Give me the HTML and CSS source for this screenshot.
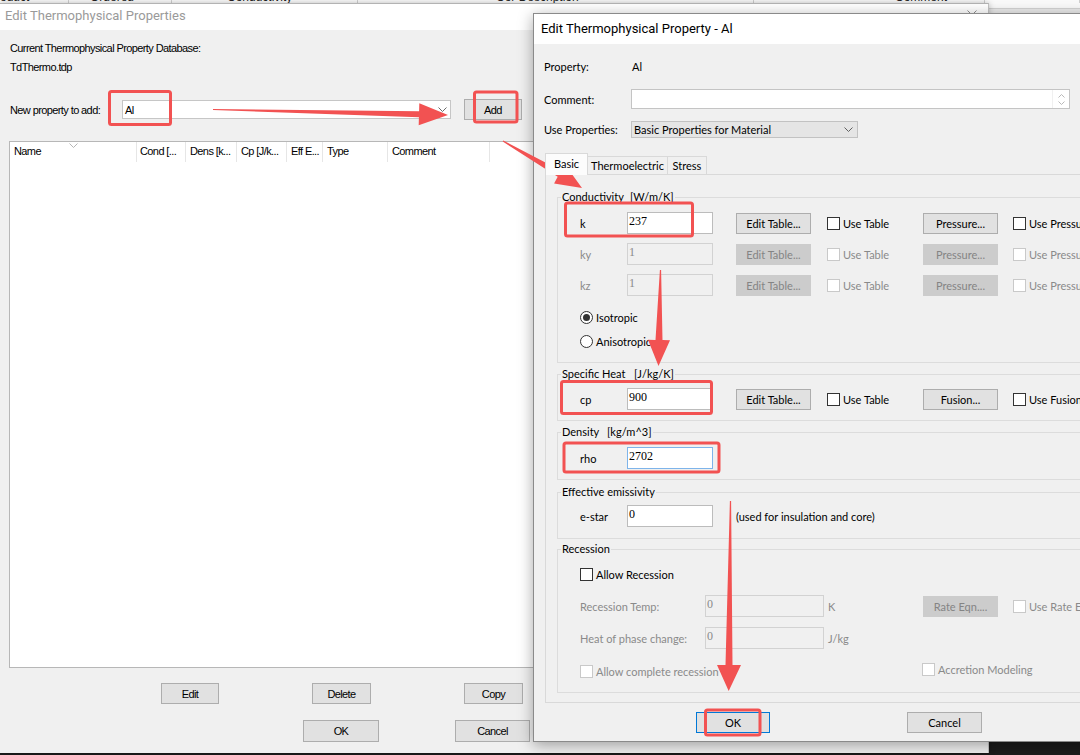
FILE: index.html
```html
<!DOCTYPE html>
<html lang="en">

<head>
    <meta charset="UTF-8">
    <title>Edit Thermophysical Property - Al</title>
    <link rel="stylesheet" href="styles.css">
</head>

<body>
<div class="desktop">

    <!-- window further back, only its header edge is left uncovered -->
    <div class="backwin">
        <div class="backhead">
            <span class="bh-a">oduct</span>
            <span class="bh-b">Ordered</span>
            <span class="bh-c">Conductivity</span>
            <span class="bh-d">Cor Description</span>
            <span class="bh-e">Comment</span>
            <span class="bh-f"></span>
        </div>
    </div>

    <!-- property database dialog -->
    <div class="win props-win">
        <div class="caption">
            <span>Edit Thermophysical Properties</span>
            <svg class="close" width="10" height="10" viewBox="0 0 10 10">
                <path d="M0.5 0.5L9.5 9.5M9.5 0.5L0.5 9.5" stroke="#8f8f8f" stroke-width="1" fill="none" />
            </svg>
        </div>

        <div class="props-body">
            <p class="line db-title">Current Thermophysical Property Database:</p>
            <p class="line db-file">TdThermo.tdp</p>

            <div class="add-row">
                <span class="add-label">New property to add:</span>
                <div class="combo">
                    <span>Al</span>
                    <svg width="9" height="5" viewBox="0 0 9 5">
                        <path d="M0.5 0.5L4.5 4.5L8.5 0.5" stroke="#6b6b6b" fill="none" />
                    </svg>
                </div>
                <button class="btn add-btn">Add</button>
            </div>

            <div class="listview">
                <div class="lv-head">
                    <span class="col c-name">Name
                        <svg class="sort" width="9" height="5" viewBox="0 0 9 5">
                            <path d="M0.5 0.5L4.5 4.5L8.5 0.5" stroke="#b5b5b5" fill="none" />
                        </svg>
                    </span>
                    <span class="col c-cond">Cond [...</span>
                    <span class="col c-dens">Dens [k...</span>
                    <span class="col c-cp">Cp [J/k...</span>
                    <span class="col c-eff">Eff E...</span>
                    <span class="col c-type">Type</span>
                    <span class="col c-comment">Comment</span>
                </div>
            </div>

            <div class="btn-row row-edit">
                <button class="btn w58">Edit</button>
                <button class="btn w59">Delete</button>
                <button class="btn w59">Copy</button>
            </div>
            <div class="btn-row row-ok">
                <button class="btn w76">OK</button>
                <button class="btn w75">Cancel</button>
            </div>
        </div>
    </div>

    <!-- editor for a single property -->
    <div class="win edit-win">
        <div class="caption">Edit Thermophysical Property - Al</div>

        <div class="edit-body">
            <div class="field f-prop">
                <span class="field-label">Property:</span>
                <span class="prop-name">Al</span>
            </div>
            <div class="field f-comment">
                <span class="field-label">Comment:</span>
                <div class="memo">
                    <div class="spin">
                        <svg width="7" height="4" viewBox="0 0 7 4"><path d="M0.5 3.5L3.5 0.5L6.5 3.5" stroke="#b9b9b9" fill="none" /></svg>
                        <svg width="7" height="4" viewBox="0 0 7 4"><path d="M0.5 0.5L3.5 3.5L6.5 0.5" stroke="#b9b9b9" fill="none" /></svg>
                    </div>
                </div>
            </div>
            <div class="field f-use">
                <span class="field-label">Use Properties:</span>
                <div class="select">
                    <span>Basic Properties for Material</span>
                    <svg width="9" height="5" viewBox="0 0 9 5">
                        <path d="M0.5 0.5L4.5 4.5L8.5 0.5" stroke="#606060" fill="none" />
                    </svg>
                </div>
            </div>

            <div class="tabs">
                <span class="tab t-basic on">Basic</span>
                <span class="tab t-thermo">Thermoelectric</span>
                <span class="tab t-stress">Stress</span>
            </div>

            <div class="tabpage">
                <fieldset class="grp g-cond">
                    <legend><span class="unit-gap w-cond">Conductivity</span>[W/m/K]</legend>
                    <div class="krow m7">
                        <span class="lbl">k</span>
                        <span class="tb">237</span>
                        <button class="btn et">Edit Table...</button>
                        <span class="chk-cell"><span class="chk"></span>Use Table</span>
                        <button class="btn pr">Pressure...</button>
                        <span class="chk-cell tail"><span class="chk"></span>Use Pressure</span>
                    </div>
                    <div class="krow m9 off">
                        <span class="lbl">ky</span>
                        <span class="tb">1</span>
                        <button class="btn et">Edit Table...</button>
                        <span class="chk-cell"><span class="chk"></span>Use Table</span>
                        <button class="btn pr">Pressure...</button>
                        <span class="chk-cell tail"><span class="chk"></span>Use Pressure</span>
                    </div>
                    <div class="krow m9 off">
                        <span class="lbl">kz</span>
                        <span class="tb">1</span>
                        <button class="btn et">Edit Table...</button>
                        <span class="chk-cell"><span class="chk"></span>Use Table</span>
                        <button class="btn pr">Pressure...</button>
                        <span class="chk-cell tail"><span class="chk"></span>Use Pressure</span>
                    </div>
                    <div class="optrow m13"><span class="radio on"></span>Isotropic</div>
                    <div class="optrow m8"><span class="radio"></span>Anisotropic</div>
                </fieldset>

                <fieldset class="grp g-heat">
                    <legend><span class="unit-gap w-heat">Specific Heat</span>[J/kg/K]</legend>
                    <div class="krow m6">
                        <span class="lbl">cp</span>
                        <span class="tb">900</span>
                        <button class="btn et">Edit Table...</button>
                        <span class="chk-cell"><span class="chk"></span>Use Table</span>
                        <button class="btn pr">Fusion...</button>
                        <span class="chk-cell tail"><span class="chk"></span>Use Fusion</span>
                    </div>
                </fieldset>

                <fieldset class="grp g-dens">
                    <legend><span class="unit-gap w-dens">Density</span>[kg/m^3]</legend>
                    <div class="krow m7">
                        <span class="lbl">rho</span>
                        <span class="tb focus">2702</span>
                    </div>
                </fieldset>

                <fieldset class="grp g-emis">
                    <legend>Effective emissivity</legend>
                    <div class="krow m5">
                        <span class="lbl">e-star</span>
                        <span class="tb">0</span>
                        <span class="note">(used for insulation and core)</span>
                    </div>
                </fieldset>

                <fieldset class="grp g-rec">
                    <legend>Recession</legend>
                    <div class="optrow m9"><span class="chk"></span>Allow Recession</div>
                    <div class="krow m13 off">
                        <span class="lbl wide">Recession Temp:</span>
                        <span class="tb long">0</span>
                        <span class="unit">K</span>
                        <button class="btn pr">Rate Eqn....</button>
                        <span class="chk-cell tail"><span class="chk"></span>Use Rate Eqn</span>
                    </div>
                    <div class="krow m10 off">
                        <span class="lbl wide">Heat of phase change:</span>
                        <span class="tb long">0</span>
                        <span class="unit">J/kg</span>
                    </div>
                    <div class="optrow m14 off">
                        <span class="chk-cell full"><span class="chk"></span>Allow complete recession</span>
                        <span class="chk-cell raised"><span class="chk"></span>Accretion Modeling</span>
                    </div>
                </fieldset>
            </div>

            <div class="btn-row row-dlg">
                <button class="btn default">OK</button>
                <button class="btn cancel">Cancel</button>
            </div>
        </div>
    </div>

    <!-- red call-outs drawn over both dialogs -->
    <svg class="marks" width="1080" height="755" viewBox="0 0 1080 755">
        <g fill="none" stroke="#f25252" stroke-width="3" stroke-linejoin="round">
            <rect x="109.5" y="91.5" width="61" height="33" rx="2" />
            <rect x="474.5" y="92" width="42.5" height="30" rx="2" />
            <rect x="565.5" y="203" width="127" height="33" rx="2" />
            <rect x="561.5" y="381.5" width="150" height="32" rx="2" />
            <rect x="564" y="443" width="155" height="29" rx="2" />
            <rect x="705.5" y="710" width="54.5" height="25" rx="2" />
        </g>
        <g fill="#f25252">
            <polygon points="213,108.9 419.1,111.3 419.3,103.3 448,115 418.7,125.3 418.9,117.3 213,110.1" />
            <polygon points="503.3,140.5 561.2,170.7 564.8,164.2 582,188 554.1,183.4 557.7,176.8 502.7,141.5" />
            <polygon points="659.9,270 655.5,339.9 648,339.8 658.5,366 670,340.2 662.5,340.1 661.1,270" />
            <polygon points="729.9,501 725.5,665 717,664.9 728.7,691 741,665.1 732.5,665 731.1,501" />
        </g>
    </svg>
</div>
</body>

</html>
```

FILE: styles.css
```css
* {
    margin: 0;
    padding: 0;
    box-sizing: border-box;
}

body {
    background-color: #1c1c1c;
}

.desktop {
    position: relative;
    width: 1080px;
    height: 755px;
    overflow: hidden;
    background-color: #1c1c1c;
}

/* back window strip */
.backwin {
    position: absolute;
    left: 0;
    top: 0;
    width: 1080px;
    height: 14px;
    background-color: #ebebeb;
}

.backhead {
    display: flex;
    height: 9px;
    background-color: #fafafa;
    border-bottom: 1px solid #d3d3d3;
    overflow: hidden;
    font: 12px "Liberation Sans", Arial, sans-serif;
    color: #222;
}

.backhead span {
    height: 12px;
    margin-top: -9px;
    line-height: 12px;
    border-right: 1px solid #d0d0d0;
    white-space: nowrap;
    overflow: hidden;
}

.bh-a { width: 69px; }
.bh-b { width: 103px; padding-left: 21px; }
.bh-c { width: 186px; padding-left: 55px; }
.bh-d { width: 396px; padding-left: 138px; }
.bh-e { width: 231px; padding-left: 141px; }
.bh-f { flex: 1; }

/* dialogs */
.win {
    position: absolute;
    background-color: #f0f0f0;
    color: #000;
}

.caption {
    display: flex;
    background-color: #fff;
    font: 13px Roboto, "Noto Sans", sans-serif;
    letter-spacing: 0;
    white-space: nowrap;
}

.btn {
    font: inherit;
    letter-spacing: inherit;
    color: #000;
    background-color: #e1e1e1;
    border: 1px solid #adadad;
    white-space: nowrap;
}

.btn-row {
    display: flex;
}

/* property list dialog */
.props-win {
    left: 0;
    top: 3px;
    width: 989px;
    height: 750px;
    border-top: 1px solid #b3b3b3;
    border-right: 1px solid #c2c2c2;
    box-shadow: 0 0 6px rgba(0, 0, 0, 0.25);
    font: 11px "Liberation Sans", Arial, sans-serif;
    letter-spacing: -0.6px;
}

.props-win .caption {
    height: 26px;
    padding: 3px 0 0 5px;
    line-height: 18px;
    color: #9a9a9a;
}

.close {
    margin: 3px 11px 0 auto;
}

.props-body {
    padding-left: 10px;
}

.line {
    line-height: 14px;
}

.db-title {
    margin-top: 11px;
}

.db-file {
    margin-top: 5px;
}

.add-row {
    display: flex;
    align-items: center;
    height: 21px;
    margin-top: 25px;
}

.add-label {
    width: 112px;
}

.combo {
    display: flex;
    align-items: center;
    justify-content: space-between;
    width: 329px;
    height: 19px;
    padding: 0 3px 0 2px;
    background-color: #fff;
    border: 1px solid #c6c6c6;
}

.add-btn {
    width: 58px;
    height: 21px;
    margin-left: 13px;
}

.listview {
    width: 969px;
    height: 527px;
    margin: 21px 0 0 -1px;
    background-color: #fff;
    border: 1px solid #b7b7b7;
}

.lv-head {
    display: flex;
    height: 20px;
    line-height: 19px;
}

.col {
    position: relative;
    padding-left: 4px;
    border-right: 1px solid #e6e6e6;
    white-space: nowrap;
    overflow: hidden;
}

.c-name { width: 127px; }
.c-cond { width: 49px; padding-left: 3px; }
.c-dens { width: 51px; }
.c-cp { width: 50px; }
.c-eff { width: 36px; }
.c-type { width: 65px; }
.c-comment { width: 102px; }

.sort {
    position: absolute;
    left: 59px;
    top: 1px;
}

.row-edit {
    height: 21px;
    margin-top: 15px;
    padding-left: 151px;
    gap: 93px;
}

.row-ok {
    height: 22px;
    margin-top: 16px;
    padding-left: 293px;
    gap: 76px;
}

.w58 { width: 58px; }
.w59 { width: 59px; }
.w75 { width: 75px; }
.w76 { width: 76px; }

/* property editor dialog */
.edit-win {
    left: 533px;
    top: 13px;
    width: 620px;
    height: 729px;
    border: 1px solid #8a8a8a;
    box-shadow: 0 3px 14px rgba(0, 0, 0, 0.35);
    font: 11px Lato, "Noto Sans", sans-serif;
}

.edit-win .caption {
    height: 30px;
    padding: 0 0 1px 7px;
    align-items: center;
}

.edit-body {
    padding-left: 10px;
}

.field {
    display: flex;
    align-items: center;
}

.field-label {
    width: 87px;
}

.f-prop {
    height: 20px;
    margin-top: 12px;
}

.prop-name {
    padding-left: 1px;
}

.f-comment {
    height: 20px;
    margin-top: 13px;
}

.memo {
    display: flex;
    justify-content: flex-end;
    width: 439px;
    height: 20px;
    background-color: #fff;
    border: 1px solid #c4c4c4;
}

.spin {
    display: flex;
    flex-direction: column;
    justify-content: space-around;
    align-items: center;
    width: 17px;
    padding: 2px 0;
    border-left: 1px solid #f0f0f0;
}

.f-use {
    height: 17px;
    margin-top: 12px;
}

.select {
    display: flex;
    align-items: center;
    justify-content: space-between;
    width: 227px;
    height: 17px;
    padding: 0 4px 0 2px;
    background-color: #e5e5e5;
    border: 1px solid #c2c2c2;
}

/* tab strip */
.tabs {
    position: relative;
    z-index: 1;
    display: flex;
    align-items: flex-end;
    height: 21px;
    margin: 15px 0 0 1px;
}

.tab {
    height: 18px;
    line-height: 17px;
    text-align: center;
    border: 1px solid #d9d9d9;
    border-bottom: none;
    background-color: #f0f0f0;
}

.tab + .tab {
    margin-left: -1px;
}

.tab.on {
    height: 22px;
    margin-bottom: -1px;
    line-height: 19px;
    background-color: #fcfcfc;
}

.t-basic { width: 43px; }
.t-thermo { width: 81px; }
.t-stress { width: 40px; }

.tabpage {
    height: 529px;
    margin-left: 1px;
    padding-left: 11px;
    border: 1px solid #d9d9d9;
}

/* group boxes */
.grp {
    min-width: 0;
    border: 1px solid #dcdcdc;
}

.grp legend {
    margin-left: 3px;
    padding: 0 1px;
    line-height: 16px;
}

.unit-gap {
    display: inline-block;
}

.w-cond { width: 68px; }
.w-heat { width: 72px; }
.w-dens { width: 45px; }

.g-cond { margin-top: 14px; padding-bottom: 13px; }
.g-heat { margin-top: 3px; padding-bottom: 10px; }
.g-dens { margin-top: 3px; padding-bottom: 10px; }
.g-emis { margin-top: 4px; padding-bottom: 11px; }
.g-rec { margin-top: 2px; padding-bottom: 13px; }

.krow {
    display: flex;
    align-items: center;
    height: 22px;
    padding-left: 22px;
    white-space: nowrap;
}

.optrow {
    display: flex;
    align-items: center;
    height: 16px;
    padding-left: 22px;
    white-space: nowrap;
}

.m5 { margin-top: 5px; }
.m6 { margin-top: 6px; }
.m7 { margin-top: 7px; }
.m8 { margin-top: 8px; }
.m9 { margin-top: 9px; }
.m10 { margin-top: 10px; }
.m13 { margin-top: 13px; }
.m14 { margin-top: 14px; }

.lbl {
    width: 47px;
    flex-shrink: 0;
}

.lbl.wide {
    width: 125px;
}

.tb {
    flex-shrink: 0;
    width: 86px;
    height: 22px;
    padding: 1px 0 0 1px;
    font: 12px "Liberation Serif", "Times New Roman", serif;
    line-height: 14px;
    background-color: #fff;
    border: 1px solid #bcbcbc;
}

.tb.long {
    width: 119px;
}

.tb.focus {
    border-color: #7eb4ea;
}

.krow .et {
    flex-shrink: 0;
    width: 75px;
    height: 21px;
    margin-left: 23px;
}

.krow .pr {
    flex-shrink: 0;
    width: 75px;
    height: 21px;
}

.chk-cell {
    display: flex;
    align-items: center;
    flex-shrink: 0;
    width: 96px;
    margin-left: 16px;
}

.chk-cell.tail {
    width: auto;
    margin-left: 15px;
}

.optrow .chk-cell {
    margin-left: 0;
}

.chk-cell.full {
    width: 342px;
}

.chk-cell.raised {
    width: auto;
    margin-bottom: 4px;
}

.chk {
    flex-shrink: 0;
    width: 13px;
    height: 13px;
    margin-right: 3px;
    background-color: #fff;
    border: 1px solid #333;
}

.radio {
    flex-shrink: 0;
    position: relative;
    width: 13px;
    height: 13px;
    margin-right: 3px;
    background-color: #fff;
    border: 1px solid #333;
    border-radius: 50%;
}

.radio.on::after {
    content: "";
    position: absolute;
    left: 2px;
    top: 2px;
    width: 7px;
    height: 7px;
    border-radius: 50%;
    background-color: #333;
}

.note {
    margin-left: 23px;
}

.unit {
    flex-shrink: 0;
    width: 99px;
    padding-left: 4px;
}

/* disabled controls */
.off {
    color: #8a8a8a;
}

.off .tb {
    color: #8a8a8a;
    background-color: #f0f0f0;
    border-color: #d2d2d2;
}

.off .btn {
    color: #848484;
    background-color: #cccccc;
    border-color: #cccccc;
}

.off .chk {
    border-color: #c9c9c9;
}

/* bottom buttons */
.row-dlg {
    height: 21px;
    margin-top: 9px;
}

.row-dlg .default {
    width: 74px;
    margin-left: 152px;
    border-color: #0078d7;
}

.row-dlg .cancel {
    width: 75px;
    margin-left: 137px;
}

/* annotations */
.marks {
    position: absolute;
    left: 0;
    top: 0;
    pointer-events: none;
}
```
